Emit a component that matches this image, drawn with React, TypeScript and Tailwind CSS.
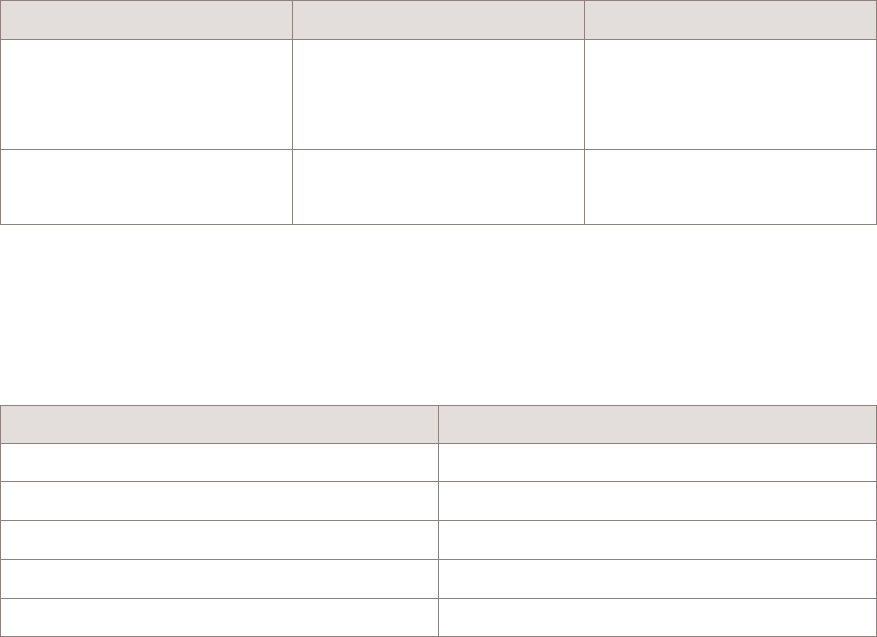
import React from 'react';

const topRows = [
  'h-[109px]',
  'h-[74px]',
];

const bottomRows = [
  'h-[37px]',
  'h-[38px]',
  'h-[38px]',
  'h-[38px]',
  'h-[37px]',
];

export default function App() {
  return (
    <div className="w-[877px] bg-white font-['Liberation_Sans',sans-serif]">
      {/* first table: three columns */}
      <div className="grid grid-cols-3 gap-px bg-[#8f807b] p-px">
        <div className="h-[38px] bg-[#e3dddb]" />
        <div className="h-[38px] bg-[#e3dddb]" />
        <div className="h-[38px] bg-[#e3dddb]" />
        {topRows.map((h, i) => (
          <React.Fragment key={i}>
            <div className={`${h} bg-white`} />
            <div className={`${h} bg-white`} />
            <div className={`${h} bg-white`} />
          </React.Fragment>
        ))}
      </div>

      {/* second table: two columns */}
      <div className="mt-[180px] grid grid-cols-2 gap-px bg-[#8f807b] p-px">
        <div className="h-[37px] bg-[#e3dddb]" />
        <div className="h-[37px] bg-[#e3dddb]" />
        {bottomRows.map((h, i) => (
          <React.Fragment key={i}>
            <div className={`${h} bg-white`} />
            <div className={`${h} bg-white`} />
          </React.Fragment>
        ))}
      </div>
    </div>
  );
}
